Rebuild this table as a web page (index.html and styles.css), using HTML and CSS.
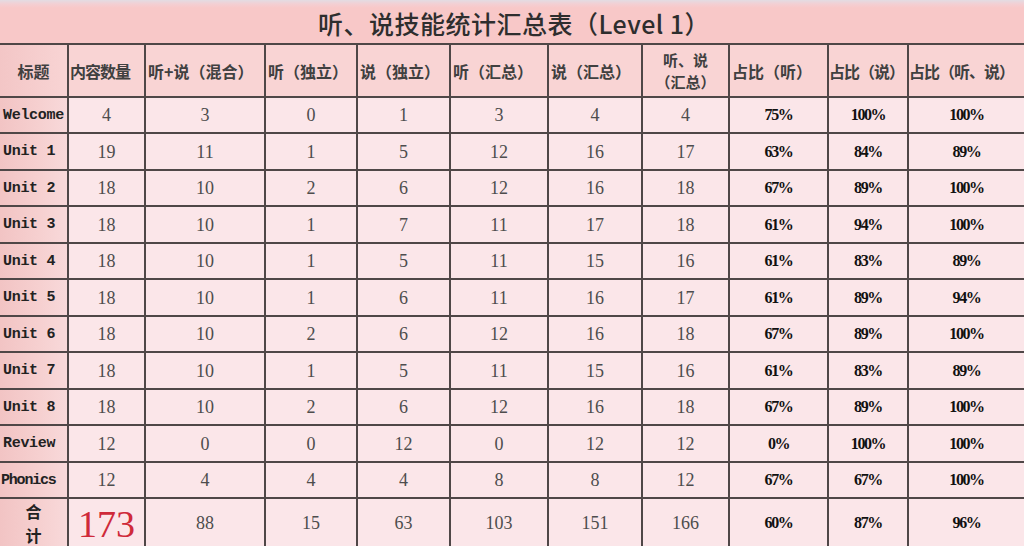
FILE: index.html
```html
<!DOCTYPE html>
<html lang="zh">
<head>
<meta charset="utf-8">
<title>听、说技能统计汇总表</title>
<link rel="stylesheet" href="styles.css">
</head>
<body>
<table class="sheet">
  <colgroup>
    <col class="c1"><col class="c2"><col class="c3"><col class="c4"><col class="c5"><col class="c6"><col class="c7"><col class="c8"><col class="c9"><col class="c10"><col class="c11">
  </colgroup>
  <tr class="title-row"><td colspan="11" class="title">听、说技能统计汇总表（Level 1）</td></tr>
  <tr class="head-row">
    <th class="first">标题</th>
    <th class="tight">内容数量</th>
    <th class="left">听+说（混合）</th>
    <th class="left">听（独立）</th>
    <th class="left">说（独立）</th>
    <th class="left">听（汇总）</th>
    <th class="left">说（汇总）</th>
    <th class="two">听、说<br>（汇总）</th>
    <th class="left">占比（听）</th>
    <th class="left flush">占比（说）</th>
    <th class="left flush last">占比（听、说）</th>
  </tr>
  <tr class="r36"><td class="first name">Welcome</td><td class="num">4</td><td class="num">3</td><td class="num">0</td><td class="num">1</td><td class="num">3</td><td class="num">4</td><td class="num">4</td><td class="pct">75%</td><td class="pct">100%</td><td class="pct last">100%</td></tr>
  <tr class="r37"><td class="first name">Unit 1</td><td class="num">19</td><td class="num">11</td><td class="num">1</td><td class="num">5</td><td class="num">12</td><td class="num">16</td><td class="num">17</td><td class="pct">63%</td><td class="pct">84%</td><td class="pct last">89%</td></tr>
  <tr class="r36"><td class="first name">Unit 2</td><td class="num">18</td><td class="num">10</td><td class="num">2</td><td class="num">6</td><td class="num">12</td><td class="num">16</td><td class="num">18</td><td class="pct">67%</td><td class="pct">89%</td><td class="pct last">100%</td></tr>
  <tr class="r37"><td class="first name">Unit 3</td><td class="num">18</td><td class="num">10</td><td class="num">1</td><td class="num">7</td><td class="num">11</td><td class="num">17</td><td class="num">18</td><td class="pct">61%</td><td class="pct">94%</td><td class="pct last">100%</td></tr>
  <tr class="r36"><td class="first name">Unit 4</td><td class="num">18</td><td class="num">10</td><td class="num">1</td><td class="num">5</td><td class="num">11</td><td class="num">15</td><td class="num">16</td><td class="pct">61%</td><td class="pct">83%</td><td class="pct last">89%</td></tr>
  <tr class="r37"><td class="first name">Unit 5</td><td class="num">18</td><td class="num">10</td><td class="num">1</td><td class="num">6</td><td class="num">11</td><td class="num">16</td><td class="num">17</td><td class="pct">61%</td><td class="pct">89%</td><td class="pct last">94%</td></tr>
  <tr class="r36"><td class="first name">Unit 6</td><td class="num">18</td><td class="num">10</td><td class="num">2</td><td class="num">6</td><td class="num">12</td><td class="num">16</td><td class="num">18</td><td class="pct">67%</td><td class="pct">89%</td><td class="pct last">100%</td></tr>
  <tr class="r37"><td class="first name">Unit 7</td><td class="num">18</td><td class="num">10</td><td class="num">1</td><td class="num">5</td><td class="num">11</td><td class="num">15</td><td class="num">16</td><td class="pct">61%</td><td class="pct">83%</td><td class="pct last">89%</td></tr>
  <tr class="r36"><td class="first name">Unit 8</td><td class="num">18</td><td class="num">10</td><td class="num">2</td><td class="num">6</td><td class="num">12</td><td class="num">16</td><td class="num">18</td><td class="pct">67%</td><td class="pct">89%</td><td class="pct last">100%</td></tr>
  <tr class="r37"><td class="first name">Review</td><td class="num">12</td><td class="num">0</td><td class="num">0</td><td class="num">12</td><td class="num">0</td><td class="num">12</td><td class="num">12</td><td class="pct">0%</td><td class="pct">100%</td><td class="pct last">100%</td></tr>
  <tr class="r36"><td class="first name narrow">Phonics</td><td class="num">12</td><td class="num">4</td><td class="num">4</td><td class="num">4</td><td class="num">8</td><td class="num">8</td><td class="num">12</td><td class="pct">67%</td><td class="pct">67%</td><td class="pct last">100%</td></tr>
  <tr class="total-row"><td class="first sum">合<br>计</td><td class="big">173</td><td class="num">88</td><td class="num">15</td><td class="num">63</td><td class="num">103</td><td class="num">151</td><td class="num">166</td><td class="pct">60%</td><td class="pct">87%</td><td class="pct last">96%</td></tr>
</table>
</body>
</html>
```

FILE: styles.css
```css
html, body {
  margin: 0;
  padding: 0;
  background: #fbe6e9;
  overflow: hidden;
}

.sheet {
  width: 1024px;
  border-collapse: collapse;
  table-layout: fixed;
  font-family: "Noto Sans CJK SC", "Noto Sans", sans-serif;
  color: #333;
}

.c1 { width: 68px; }
.c2 { width: 77px; }
.c3 { width: 120px; }
.c4 { width: 92px; }
.c5 { width: 93px; }
.c6 { width: 98px; }
.c7 { width: 94px; }
.c8 { width: 87px; }
.c9 { width: 99px; }
.c10 { width: 80px; }
.c11 { width: 116px; }

.sheet td, .sheet th {
  border: 2px solid #4f4747;
  padding: 0;
  text-align: center;
  overflow: hidden;
  white-space: nowrap;
}

.sheet .first { border-left: none; }
.sheet .last { border-right: none; }

.title-row { height: 44px; }
.title {
  border-top: none !important;
  border-left: none !important;
  border-right: none !important;
  background: linear-gradient(#e3dce3 0, #f3cfd3 4px, #f8c8c8 8px, #f8c8c8 100%);
  font-size: 25px;
  font-weight: 500;
  letter-spacing: 0.5px;
  color: #2e2e2e;
  padding-top: 2px !important;
  padding-left: 4px !important;
}

.head-row { height: 53px; }
.head-row th {
  background: #f9d4d4;
  font-weight: bold;
  font-size: 16px;
  color: #404040;
  line-height: 22px;
  vertical-align: middle;
}
.head-row th.left { text-align: left; padding-left: 2px; }
.head-row th.flush { padding-left: 0; letter-spacing: -1px; }
.head-row th.tight { letter-spacing: -1px; text-align: left; padding-left: 1px; }
.head-row th.first { background: linear-gradient(90deg, #f3c6c6, #f8d4d4); }
.head-row th.two { font-size: 15px; line-height: 22px; padding-top: 1px; }

.r36 { height: 36px; }
.r37 { height: 37px; }
.total-row { height: 50px; }

.sheet td.first {
  background: linear-gradient(90deg, #f2c4c4 0, #f6d0d0 60%, #f8d9da 100%);
}

.name {
  font-family: "Liberation Mono", "DejaVu Sans Mono", monospace;
  font-weight: bold;
  font-size: 15px;
  color: #222;
  text-align: left !important;
  padding-left: 3px !important;
  letter-spacing: -0.3px;
}
.name.narrow { letter-spacing: -1.2px; padding-left: 1px !important; }

.num {
  font-family: "Liberation Serif", "Times New Roman", serif;
  font-size: 18px;
  color: #4d4d4d;
  padding-top: 1px !important;
}

.pct {
  font-family: "Liberation Serif", "Times New Roman", serif;
  font-weight: bold;
  font-size: 16px;
  letter-spacing: -1.4px;
  color: #111;
}

.sum {
  font-size: 16px;
  font-weight: bold;
  line-height: 24px;
  color: #222;
  vertical-align: top;
  padding-top: 0 !important;
}

.big {
  font-family: "Liberation Serif", "Times New Roman", serif;
  font-size: 38px;
  color: #cf2a3a;
  line-height: 1;
  padding-top: 2px !important;
}
```
